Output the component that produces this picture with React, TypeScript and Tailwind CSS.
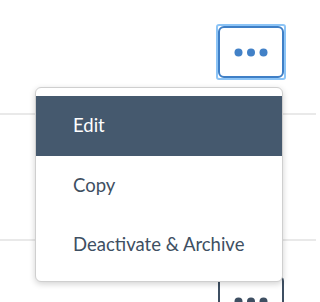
import React from 'react';

function Dots({ color }: { color: string }) {
  return (
    <svg width="34" height="9" viewBox="0 0 34 9" aria-hidden>
      <circle cx="4.5" cy="4.5" r="4" fill={color} />
      <circle cx="17" cy="4.5" r="4" fill={color} />
      <circle cx="29.5" cy="4.5" r="4" fill={color} />
    </svg>
  );
}

const items = ['Edit', 'Copy', 'Deactivate & Archive'];

export default function App() {
  return (
    <div
      className="relative w-[316px] h-[302px] overflow-hidden bg-white"
      style={{ fontFamily: 'Lato, "Open Sans", sans-serif' }}
    >
      <div className="h-[113px] flex items-start justify-end pr-[30px] pt-[24px]">
        <div className="rounded-[3px] border-2 border-[#8cc4f6]">
          <button className="w-[66px] h-[52px] rounded-[6px] border-2 border-[#3f7fc6] bg-white flex items-center justify-center">
            <Dots color="#4281c7" />
          </button>
        </div>
      </div>
      <div className="h-[2px] bg-[#e9e9e9]" />
      <div className="h-[124px]" />
      <div className="h-[2px] bg-[#e9e9e9]" />
      <div className="flex items-start justify-end pr-[32px] pt-[34px]">
        <button className="w-[66px] h-[52px] rounded-[6px] border-2 border-[#3e4f62] bg-white flex items-center justify-center">
          <Dots color="#3e4f62" />
        </button>
      </div>

      <div className="absolute left-[35px] top-[87px] w-[248px] h-[195px] rounded-[6px] border border-[#cfcfcf] bg-white pt-[8px] shadow-[0_2px_6px_rgba(0,0,0,0.18)]">
        {items.map((label, i) => (
          <div
            key={label}
            className={
              i === 0
                ? 'h-[60px] flex items-center pl-[37px] bg-[#45596e] text-white text-[18.5px]'
                : 'h-[59px] flex items-center pl-[37px] text-[#3e4f62] text-[18.5px]'
            }
          >
            {label}
          </div>
        ))}
      </div>
    </div>
  );
}
